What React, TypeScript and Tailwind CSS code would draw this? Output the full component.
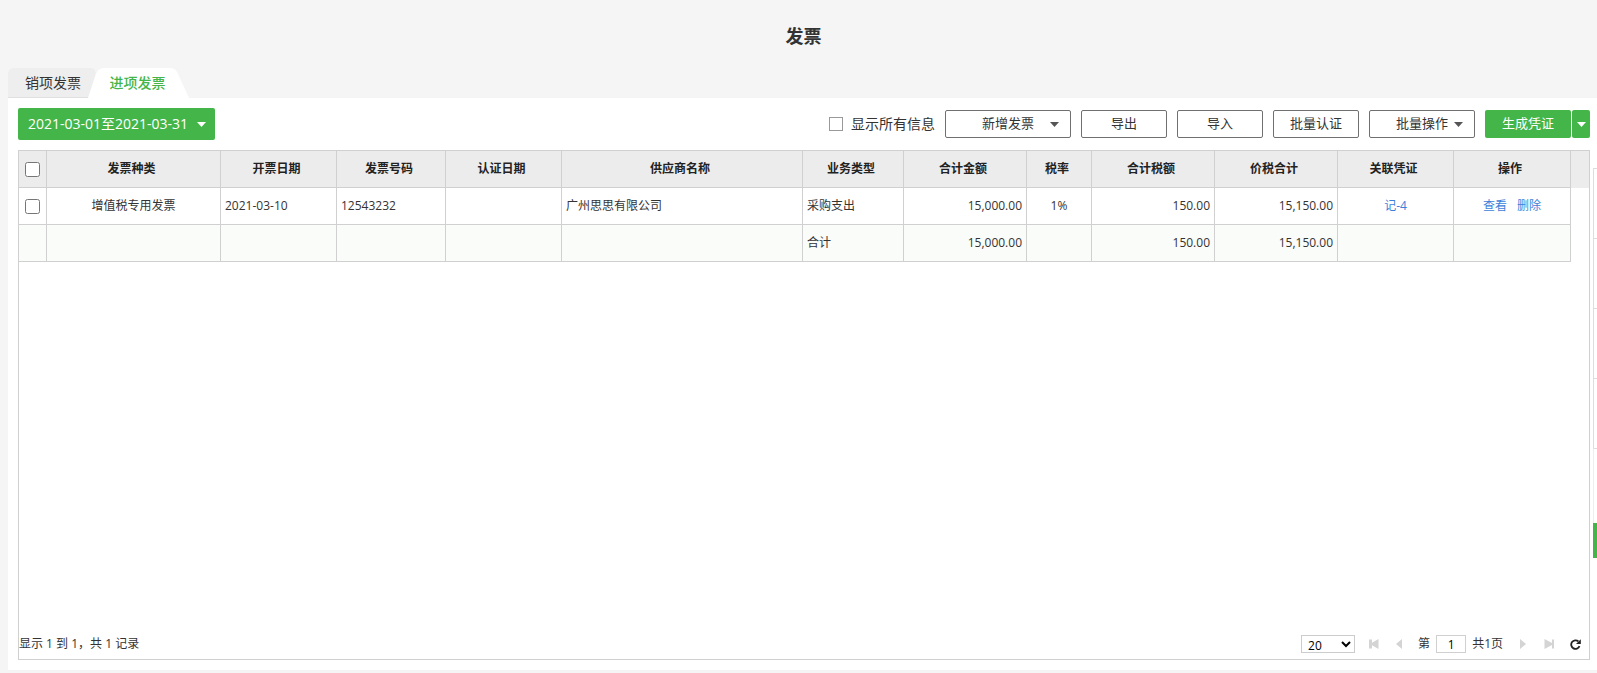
import { useState } from "react";

const GREEN_BUTTON = "flex items-center rounded-xs bg-[#44b549] text-white";
const OUTLINE_BUTTON =
  "h-7 rounded-xs border border-[#707070] bg-white text-[13px] text-[#333]";

const columns = [
  { title: "发票种类", width: "w-[174px]" },
  { title: "开票日期", width: "w-[116px]" },
  { title: "发票号码", width: "w-[109px]" },
  { title: "认证日期", width: "w-[116px]" },
  { title: "供应商名称", width: "" },
  { title: "业务类型", width: "w-[101px]" },
  { title: "合计金额", width: "w-[123px]" },
  { title: "税率", width: "w-[65px]" },
  { title: "合计税额", width: "w-[123px]" },
  { title: "价税合计", width: "w-[123px]" },
  { title: "关联凭证", width: "w-[116px]" },
  { title: "操作", width: "w-[117px]" },
];

const BOX = "h-[37px] border-r border-b border-[#d0d0d0]";
const CELL = `${BOX} px-1`;
const TOTAL_CELL = `${CELL} bg-[#fafcf9]`;

function Caret({ className = "" }: { className?: string }) {
  return (
    <svg
      className={className}
      width="9"
      height="5"
      viewBox="0 0 9 5"
      fill="currentColor"
      aria-hidden="true"
    >
      <path d="M0 0h9L4.5 5z" />
    </svg>
  );
}

function MenuButton({ label, width }: { label: string; width: string }) {
  return (
    <button
      type="button"
      className={`${OUTLINE_BUTTON} ${width} grid grid-cols-[1fr_auto_1fr] items-center px-[11px]`}
    >
      <span className="col-start-2">{label}</span>
      <Caret className="justify-self-end text-[#555]" />
    </button>
  );
}

function Tabs() {
  return (
    <div role="tablist" className="flex h-[30px] text-sm">
      <button
        type="button"
        role="tab"
        aria-selected="false"
        className="w-20 rounded-tl-md border-b border-[#e0e0e0] bg-[#eee] pl-[17px] text-left whitespace-nowrap text-[#333]"
      >
        销项发票
      </button>
      <button
        type="button"
        role="tab"
        aria-selected="true"
        className="relative w-[101px] pr-[2px] text-center font-medium text-[#44b549]"
      >
        <svg
          className="absolute inset-0"
          width="101"
          height="30"
          viewBox="0 0 101 30"
          aria-hidden="true"
        >
          <path d="M0 0h3q6 0 4 8L0 30z" fill="#eee" />
          <path
            d="M0 30L8 6Q10 0 16 0H82Q88 0 90 6L101 30z"
            fill="#fff"
          />
        </svg>
        <span className="relative">进项发票</span>
      </button>
    </div>
  );
}

function Toolbar() {
  return (
    <div className="flex h-8 items-center justify-between">
      <button
        type="button"
        className={`${GREEN_BUTTON} h-8 w-[197px] justify-between pr-[9px] pl-[10px] text-sm`}
      >
        2021-03-01至2021-03-31
        <Caret />
      </button>
      <div className="flex items-center gap-[10px]">
        <label className="flex items-center gap-2 text-sm">
          <input
            type="checkbox"
            className="size-[14px] appearance-none border border-[#999] bg-white checked:bg-[#44b549]"
          />
          显示所有信息
        </label>
        <MenuButton label="新增发票" width="w-[126px]" />
        <button type="button" className={`${OUTLINE_BUTTON} w-[86px]`}>
          导出
        </button>
        <button type="button" className={`${OUTLINE_BUTTON} w-[86px]`}>
          导入
        </button>
        <button type="button" className={`${OUTLINE_BUTTON} w-[86px]`}>
          批量认证
        </button>
        <MenuButton label="批量操作" width="w-[106px]" />
        <div className="flex gap-px">
          <button
            type="button"
            className={`${GREEN_BUTTON} h-7 w-[86px] justify-center text-[13px]`}
          >
            生成凭证
          </button>
          <button
            type="button"
            aria-label="更多"
            className={`${GREEN_BUTTON} h-7 w-[18px] justify-center`}
          >
            <Caret />
          </button>
        </div>
      </div>
    </div>
  );
}

function InvoiceTable() {
  return (
    <table className="w-full table-fixed border-separate border-spacing-0 text-xs">
      <colgroup>
        <col className="w-7" />
        {columns.map((c) => (
          <col key={c.title} className={c.width} />
        ))}
        <col className="w-[18px]" />
      </colgroup>
      <thead>
        <tr className="bg-[#ececec] text-[#222]">
          <th className={CELL}>
            <input
              type="checkbox"
              aria-label="全选"
              className="mx-auto block size-[15px]"
            />
          </th>
          {columns.map((c) => (
            <th key={c.title} className={`${BOX} pr-2 pl-1 font-semibold`}>
              {c.title}
            </th>
          ))}
          <td />
        </tr>
      </thead>
      <tbody>
        <tr>
          <td className={CELL}>
            <input
              type="checkbox"
              aria-label="选择发票 12543232"
              className="mx-auto block size-[15px]"
            />
          </td>
          <td className={`${CELL} text-center`}>增值税专用发票</td>
          <td className={CELL}>2021-03-10</td>
          <td className={CELL}>12543232</td>
          <td className={CELL} />
          <td className={CELL}>广州思思有限公司</td>
          <td className={CELL}>采购支出</td>
          <td className={`${CELL} text-right`}>15,000.00</td>
          <td className={`${CELL} text-center`}>1%</td>
          <td className={`${CELL} text-right`}>150.00</td>
          <td className={`${CELL} text-right`}>15,150.00</td>
          <td className={`${CELL} text-center`}>
            <a href="#voucher" className="text-[#3d7fd9]">
              记-4
            </a>
          </td>
          <td className={CELL}>
            <div className="flex justify-center gap-[10px] text-[#3d7fd9]">
              <a href="#view">查看</a>
              <a href="#delete">删除</a>
            </div>
          </td>
          <td />
        </tr>
        <tr>
          <td className={TOTAL_CELL} />
          <td className={TOTAL_CELL} />
          <td className={TOTAL_CELL} />
          <td className={TOTAL_CELL} />
          <td className={TOTAL_CELL} />
          <td className={TOTAL_CELL} />
          <td className={TOTAL_CELL}>合计</td>
          <td className={`${TOTAL_CELL} text-right`}>15,000.00</td>
          <td className={TOTAL_CELL} />
          <td className={`${TOTAL_CELL} text-right`}>150.00</td>
          <td className={`${TOTAL_CELL} text-right`}>15,150.00</td>
          <td className={TOTAL_CELL} />
          <td className={TOTAL_CELL} />
          <td />
        </tr>
      </tbody>
    </table>
  );
}

function PageIcon({ d, label }: { d: string; label: string }) {
  return (
    <button type="button" aria-label={label} className="text-[#d4d4d4]">
      <svg width="10" height="10" viewBox="0 0 10 10" fill="currentColor">
        <path d={d} />
      </svg>
    </button>
  );
}

function Pager() {
  const [page, setPage] = useState("1");
  return (
    <div className="flex h-[30px] items-center justify-between pr-2 text-xs">
      <span>显示 1 到 1，共 1 记录</span>
      <div className="flex items-center">
        <select
          aria-label="每页条数"
          defaultValue="20"
          className="mr-[14px] h-[18px] w-[54px] border border-[#ccc] bg-white pb-px pl-[2px] leading-[14px] text-black"
        >
          <option>20</option>
          <option>50</option>
          <option>100</option>
        </select>
        <div className="flex items-center gap-4">
          <PageIcon label="首页" d="M0 .5h3v3.3L9.5 0v10L3 6.2v3.3H0z" />
          <PageIcon label="上一页" d="M7 0v10L1 5z" />
        </div>
        <label className="ml-[13px] flex items-center gap-[6px]">
          第
          <input
            type="text"
            value={page}
            onChange={(e) => setPage(e.target.value)}
            className="h-[18px] w-[30px] border border-[#d0d0d0] bg-white text-center text-black"
          />
        </label>
        <span className="ml-[6px]">共1页</span>
        <div className="ml-[15px] flex items-center gap-4">
          <PageIcon label="下一页" d="M2 0v10L8 5z" />
          <PageIcon label="末页" d="M10 .5H8v3.6L.5 0v10L8 5.9v3.6h2z" />
          <button type="button" aria-label="刷新" className="text-[#222]">
            <svg width="11" height="11" viewBox="0 0 11 11" fill="none">
              <path
                d="M9.5 7.2A4.3 4.3 0 1 1 8.4 2.4"
                stroke="currentColor"
                strokeWidth="1.8"
              />
              <path d="M10.8 .2v4.8H6z" fill="currentColor" />
            </svg>
          </button>
        </div>
      </div>
    </div>
  );
}

function SideDock() {
  return (
    <div className="absolute top-[168px] right-0 w-1" aria-hidden="true">
      {[0, 1, 2, 3].map((i) => (
        <div key={i} className="h-[70px] border-t border-l border-[#ddd] bg-white" />
      ))}
      <div className="h-[75px] border-t border-l border-[#eee] border-t-[#ddd] bg-white" />
      <div className="h-[35px] bg-[#44b549]" />
    </div>
  );
}

export default function App() {
  return (
    <div className="relative flex min-h-screen flex-col bg-[#f5f5f5] pb-[3px] pl-2 font-['Open_Sans','Noto_Sans_CJK_SC',sans-serif] text-[#333]">
      <h1 className="flex h-[68px] items-center justify-center pt-1 pl-[2px] text-lg font-bold">
        发票
      </h1>
      <Tabs />
      <main className="flex grow flex-col gap-[10px] bg-white pt-[10px] pr-[7px] pb-[10px] pl-[10px]">
        <Toolbar />
        <section className="flex grow flex-col justify-between border border-[#d0d0d0]">
          <InvoiceTable />
          <Pager />
        </section>
      </main>
      <SideDock />
    </div>
  );
}
